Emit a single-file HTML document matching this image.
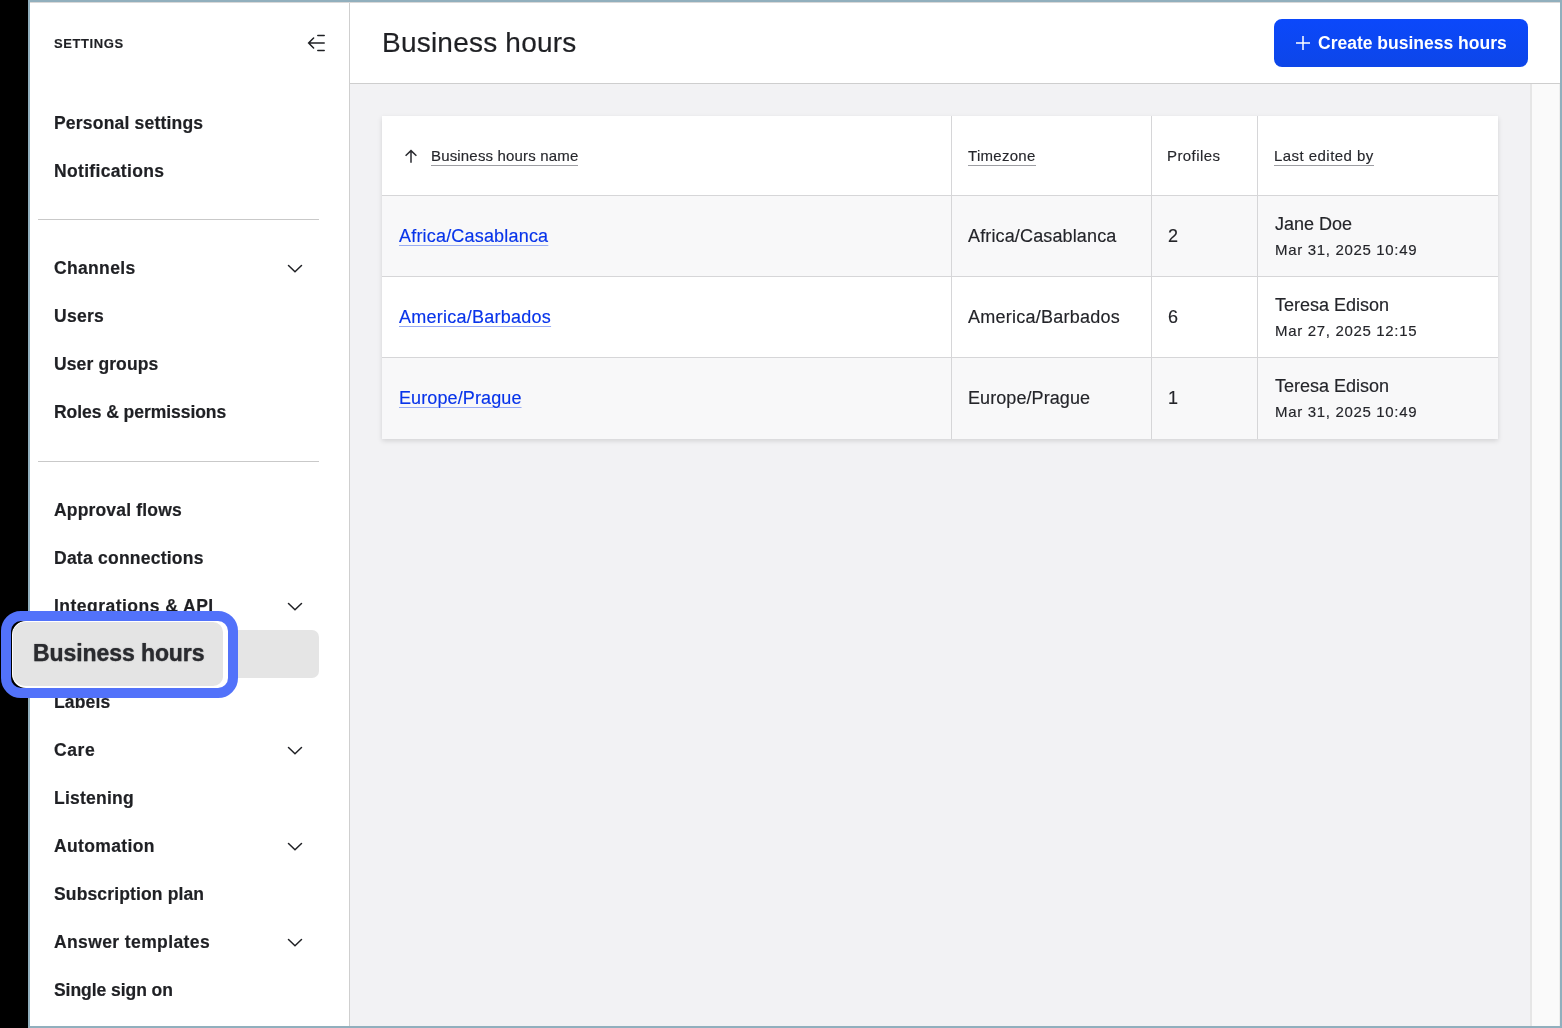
<!DOCTYPE html>
<html><head><meta charset="utf-8">
<style>
*{box-sizing:border-box;margin:0;padding:0}
html,body{width:1562px;height:1028px;overflow:hidden;background:#000;font-family:"Liberation Sans",sans-serif;color:#1f2024}
#frame{position:absolute;left:28px;top:0;width:1534px;height:1028px;background:#91afbd}
#side{position:absolute;left:30px;top:2px;width:320px;height:1024px;background:#fff;border-right:1px solid #cfcfcf}
#head{position:absolute;left:350px;top:2px;width:1210px;height:82px;background:#fff;border-bottom:1px solid #cecece}
#main{position:absolute;left:350px;top:84px;width:1210px;height:942px;background:#f2f2f4}
#sb{position:absolute;left:1530px;top:84px;width:30px;height:942px;background:#fafafa;border-left:2px solid #e6e6e6;border-right:1px solid #efefef}
.it{position:absolute;left:54px;font-weight:700;font-size:17.5px;line-height:1;white-space:nowrap;color:#1f2024;-webkit-text-stroke:0.2px #1f2024}
.chev{position:absolute;left:287px;width:16px;height:10px}
.dv{position:absolute;left:38px;width:281px;height:1px;background:#c9c9c9}
#sel{position:absolute;left:38px;top:630px;width:281px;height:48px;border-radius:7px;background:#e5e5e5}
#title{position:absolute;left:382px;top:29px;-webkit-text-stroke:0.2px #1f2024;font-size:28px;line-height:1;white-space:nowrap;color:#1f2024;letter-spacing:0.22px}
#btn{position:absolute;left:1274px;top:19px;width:254px;height:48px;border-radius:8px;background:linear-gradient(#0b48fb,#0d46e8)}
#btn span{position:absolute;left:44px;top:16px;font-size:17.5px;font-weight:700;line-height:1;color:#fff;white-space:nowrap}
#tbl{position:absolute;left:382px;top:116px;width:1116px;height:323px;background:#fff;box-shadow:0 2px 5px rgba(0,0,0,.13)}
.row{position:absolute;left:0;width:1116px;height:81px;border-top:1px solid #d6d6d8}
.vl{position:absolute;top:0;width:1px;height:323px;background:#d6d6d8}
.t{position:absolute;line-height:1;white-space:nowrap;-webkit-text-stroke:0.15px currentColor}
.h{font-size:15px;color:#26272c;letter-spacing:0.15px}
.u{border-bottom:1px solid #9d9ea3;padding-bottom:1px}
.b{font-size:18px;color:#24252a}
.lk{color:#0834ea;text-decoration:underline;text-decoration-color:#98acf4;text-underline-offset:3px;text-decoration-thickness:1px}
.d{font-size:15px;color:#24252a;letter-spacing:0.67px}
#mag{position:absolute;left:1px;top:611px;width:237px;height:87px;border:10.5px solid #5272fa;border-radius:20px;background:linear-gradient(to right,transparent 0,transparent 50%,#fff 50%)}
#magin{position:absolute;left:12px;top:621px;width:212px;height:67px;border-radius:14px 11px 11px 14px;background:#e4e4e4;border:1px solid #fff;border-bottom-width:2.5px;overflow:hidden}
#magin span{position:absolute;left:20px;top:19.5px;font-size:23px;font-weight:700;line-height:1;white-space:nowrap;color:#2a2b2f;letter-spacing:-0.08px;-webkit-text-stroke:0.25px #2a2b2f;text-shadow:0 0 1.2px rgba(30,31,36,.55)}
</style></head><body>
<div id="root" style="position:absolute;left:0;top:0;width:1562px;height:1028px;will-change:transform">
<div id="frame"></div>
<div id="side">
</div>
<div id="head"></div>
<div id="main"></div>
<div id="sb"></div>
<div style="position:absolute;left:30px;top:2px;width:1530px;height:1px;background:#d9d8d8"></div>

<!-- sidebar content (absolute page coords) -->
<div class="t" style="left:54px;top:36.5px;font-size:13px;font-weight:700;letter-spacing:0.6px;color:#1f2024">SETTINGS</div>
<svg style="position:absolute;left:305px;top:33px" width="22" height="20" viewBox="0 0 22 20" fill="none" stroke="#1f2024" stroke-width="1.5" stroke-linecap="round">
  <path d="M12.8 2.5 H19.2 M12.8 17.5 H19.2 M3.6 10 H19.2 M8.6 5 L3.6 10 L8.6 15"/>
</svg>
<div class="it" style="top:115px;letter-spacing:0.2px">Personal settings</div>
<div class="it" style="top:163px;letter-spacing:0.33px">Notifications</div>
<div class="dv" style="top:219px"></div>
<div class="it" style="top:260px;letter-spacing:0.34px">Channels</div>
<div class="it" style="top:308px;letter-spacing:0.27px">Users</div>
<div class="it" style="top:356px;letter-spacing:0.12px">User groups</div>
<div class="it" style="top:404px;letter-spacing:-0.05px">Roles &amp; permissions</div>
<div class="dv" style="top:461px"></div>
<div class="it" style="top:502px;letter-spacing:0.17px">Approval flows</div>
<div class="it" style="top:550px;letter-spacing:0.24px">Data connections</div>
<div class="it" style="top:598px;letter-spacing:0.48px">Integrations &amp; API</div>
<div id="sel"></div>
<div class="it" style="top:646px;letter-spacing:0.25px">Business hours</div>
<div class="it" style="top:694px;letter-spacing:0.16px">Labels</div>
<div class="it" style="top:742px;letter-spacing:0.6px">Care</div>
<div class="it" style="top:790px;letter-spacing:0.24px">Listening</div>
<div class="it" style="top:838px;letter-spacing:0.37px">Automation</div>
<div class="it" style="top:886px;letter-spacing:0.14px">Subscription plan</div>
<div class="it" style="top:934px;letter-spacing:0.39px">Answer templates</div>
<div class="it" style="top:982px;letter-spacing:-0.05px">Single sign on</div>

<svg class="chev" style="top:264px" viewBox="0 0 16 10" fill="none" stroke="#1f2024" stroke-width="1.5" stroke-linecap="round"><path d="M1.5 1.5 L8 7.8 L14.5 1.5"/></svg>
<svg class="chev" style="top:602px" viewBox="0 0 16 10" fill="none" stroke="#1f2024" stroke-width="1.5" stroke-linecap="round"><path d="M1.5 1.5 L8 7.8 L14.5 1.5"/></svg>
<svg class="chev" style="top:746px" viewBox="0 0 16 10" fill="none" stroke="#1f2024" stroke-width="1.5" stroke-linecap="round"><path d="M1.5 1.5 L8 7.8 L14.5 1.5"/></svg>
<svg class="chev" style="top:842px" viewBox="0 0 16 10" fill="none" stroke="#1f2024" stroke-width="1.5" stroke-linecap="round"><path d="M1.5 1.5 L8 7.8 L14.5 1.5"/></svg>
<svg class="chev" style="top:938px" viewBox="0 0 16 10" fill="none" stroke="#1f2024" stroke-width="1.5" stroke-linecap="round"><path d="M1.5 1.5 L8 7.8 L14.5 1.5"/></svg>

<!-- header -->
<div id="title">Business hours</div>
<div id="btn">
  <svg style="position:absolute;left:21px;top:16px" width="16" height="16" viewBox="0 0 16 16" fill="none" stroke="#fff" stroke-width="1.5"><path d="M8 1 V15 M1 8 H15"/></svg>
  <span>Create business hours</span>
</div>

<!-- table -->
<div id="tbl">
  <div class="row" style="top:79px;background:#f8f8f9"></div>
  <div class="row" style="top:160px;background:#fff"></div>
  <div class="row" style="top:241px;background:#f8f8f9;height:82px"></div>
  <div class="vl" style="left:569px"></div>
  <div class="vl" style="left:769px"></div>
  <div class="vl" style="left:875px"></div>

  <svg style="position:absolute;left:22px;top:33px" width="13" height="14" viewBox="0 0 13 14" fill="none" stroke="#2a2b30" stroke-width="1.5"><path d="M7 2 V13.8 M1.6 6.8 L7 1.6 L12.4 6.8"/></svg>
  <div class="t h" style="left:49px;top:32px;letter-spacing:0.17px"><span class="u">Business hours name</span></div>
  <div class="t h" style="left:586px;top:32px;letter-spacing:0.29px"><span class="u">Timezone</span></div>
  <div class="t h" style="left:785px;top:32px;letter-spacing:0.42px">Profiles</div>
  <div class="t h" style="left:892px;top:32px;letter-spacing:0.45px"><span class="u">Last edited by</span></div>

  <div class="t b lk" style="left:17px;top:111px;letter-spacing:0.19px">Africa/Casablanca</div>
  <div class="t b" style="left:586px;top:111px;letter-spacing:0.14px">Africa/Casablanca</div>
  <div class="t b" style="left:786px;top:111px">2</div>
  <div class="t b" style="left:893px;top:99px">Jane Doe</div>
  <div class="t d" style="left:893px;top:126px">Mar 31, 2025 10:49</div>

  <div class="t b lk" style="left:17px;top:192px;letter-spacing:0.25px">America/Barbados</div>
  <div class="t b" style="left:586px;top:192px;letter-spacing:0.24px">America/Barbados</div>
  <div class="t b" style="left:786px;top:192px">6</div>
  <div class="t b" style="left:893px;top:180px">Teresa Edison</div>
  <div class="t d" style="left:893px;top:207px">Mar 27, 2025 12:15</div>

  <div class="t b lk" style="left:17px;top:273px;letter-spacing:0.11px">Europe/Prague</div>
  <div class="t b" style="left:586px;top:273px;letter-spacing:0.08px">Europe/Prague</div>
  <div class="t b" style="left:786px;top:273px">1</div>
  <div class="t b" style="left:893px;top:261px">Teresa Edison</div>
  <div class="t d" style="left:893px;top:288px">Mar 31, 2025 10:49</div>
</div>

<!-- magnifier callout -->
<div id="mag"></div>
<div id="magin"><span>Business hours</span></div>
</div>
</body></html>
